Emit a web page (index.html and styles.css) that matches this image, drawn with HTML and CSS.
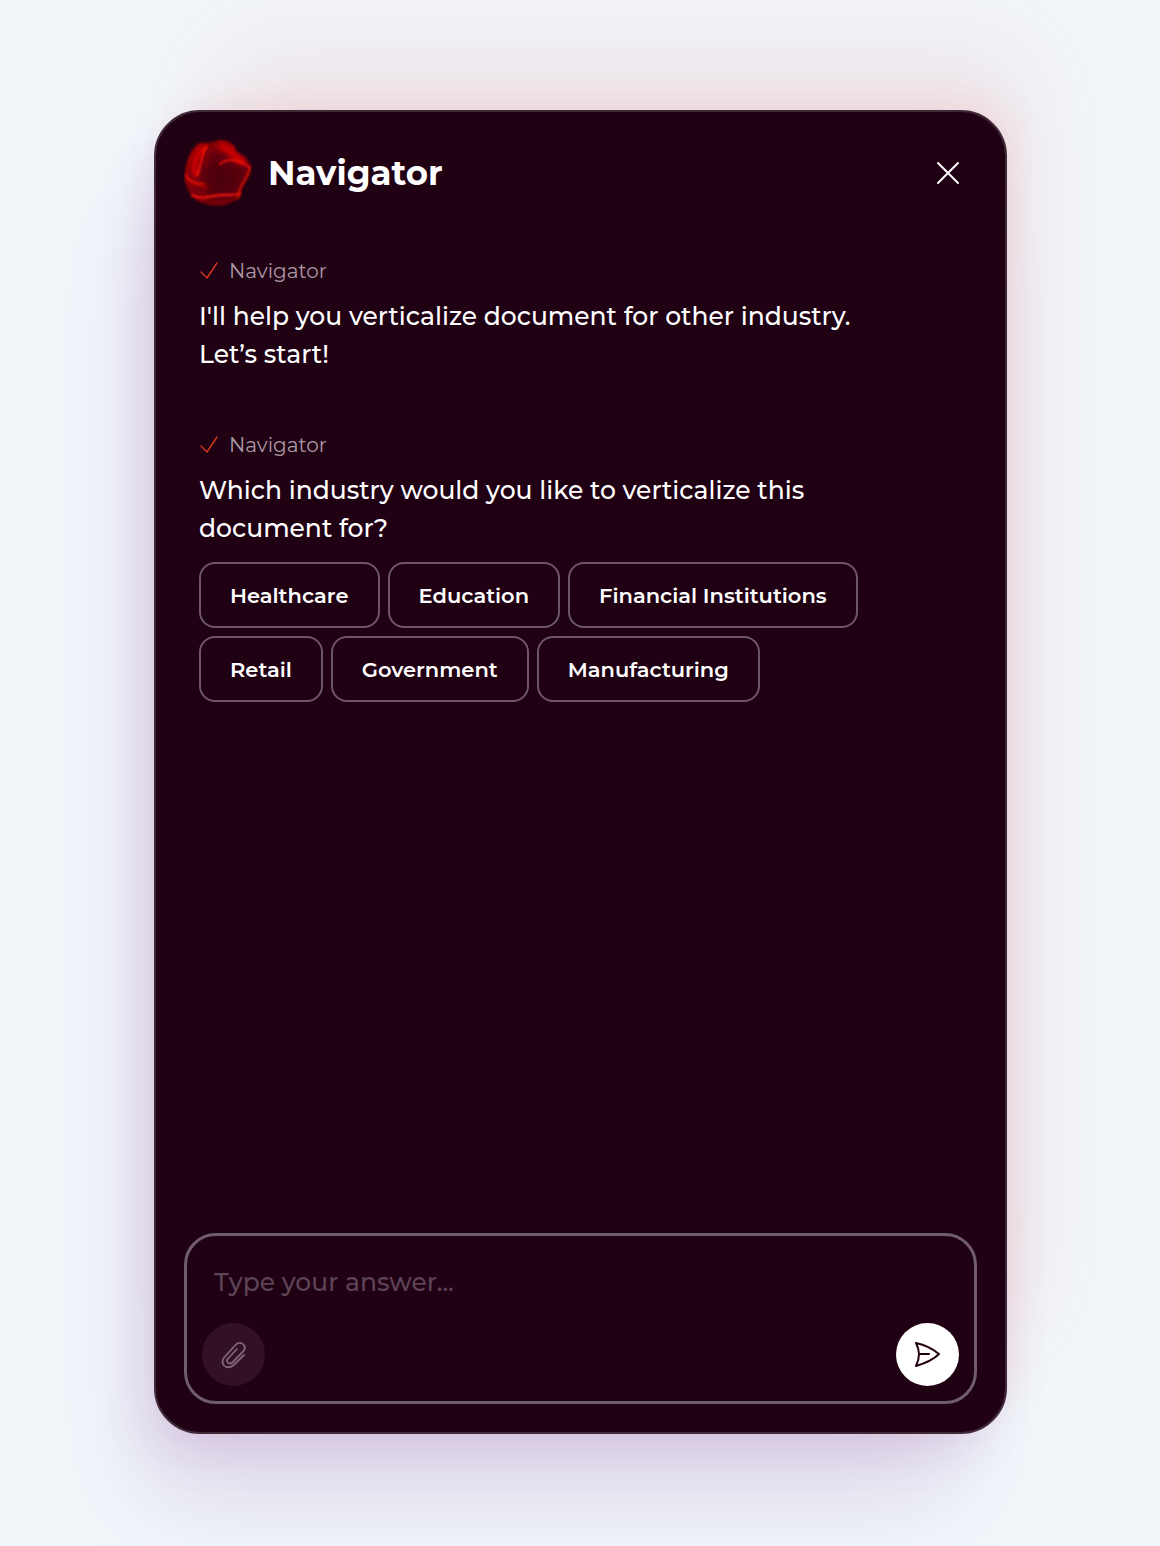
FILE: index.html
```html
<!DOCTYPE html>
<html lang="en">
<head>
  <meta charset="UTF-8">
  <meta name="viewport" content="width=device-width, initial-scale=1">
  <title>Navigator</title>
  <link rel="stylesheet" href="styles.css">
</head>
<body>

  <main class="panel">

    <!-- Header -->
    <header class="panel-header">
      <svg class="avatar" viewBox="0 0 68 68" aria-hidden="true">
        <defs>
          <radialGradient id="orb" cx="0.55" cy="0.6" r="0.6">
            <stop offset="0" stop-color="#4c0008"/>
            <stop offset="0.6" stop-color="#640008"/>
            <stop offset="1" stop-color="#800206"/>
          </radialGradient>
          <filter id="soft" x="-20%" y="-20%" width="140%" height="140%">
            <feGaussianBlur stdDeviation="0.8"/>
          </filter>
          <filter id="glow" x="-40%" y="-40%" width="180%" height="180%">
            <feGaussianBlur stdDeviation="2"/>
          </filter>
          <pattern id="mesh" width="3" height="3" patternUnits="userSpaceOnUse">
            <path d="M0 0H3M0 0V3" stroke="#2a0008" stroke-width="1"/>
          </pattern>
        </defs>
        <path filter="url(#soft)" fill="url(#orb)" d="M16 4C24 3 28 4 34 1C42 0 50 4 52 13C60 16 67 22 67 29C66 39 61 42 57 51C56 61 44 67 33 67C20 66 8 61 5 53C1 46 0 37 2 26C5 15 9 7 16 4Z"/>
        <path fill="url(#mesh)" opacity="0.4" d="M26 28C34 18 54 22 58 30C60 40 53 48 48 54H24C18 46 22 36 26 28Z"/>
        <g fill="none" stroke-linecap="round" filter="url(#glow)">
          <path stroke="#e00000" stroke-width="5" d="M19 9C11 18 8 29 12 36"/>
          <path stroke="#c80000" stroke-width="8" d="M38 8C45 8 48 17 57 22"/>
          <path stroke="#b00000" stroke-width="4" d="M3 40C9 46 16 45 22 48"/>
        </g>
        <g fill="none" stroke-linecap="round" filter="url(#soft)">
          <path stroke="#ff1508" stroke-width="2" d="M23 7C18 13 19 18 17 24C15 30 15 33 13 36"/>
          <path stroke="#d00b05" stroke-width="1" d="M17 5C7 12 2 28 3 40"/>
          <path stroke="#b00905" stroke-width="1" d="M22 28C21 17 27 8 36 4C44 2 48 6 51 13"/>
          <path stroke="#f01208" stroke-width="2" d="M36 25C44 18 56 21 65 28"/>
          <path stroke="#d01208" stroke-width="2" d="M66 28C65 36 60 42 56 50C55 54 57 58 53 59"/>
          <path stroke="#e01208" stroke-width="2" d="M2 36C4 43 13 45 19 45"/>
          <path stroke="#ff1808" stroke-width="2" d="M8 56C18 61 26 57 36 56C45 56 51 57 56 54"/>
          <path stroke="#a00805" stroke-width="1" d="M14 60C24 64 43 65 53 59M5 47C10 52 16 54 24 56"/>
          <path stroke="#c80606" stroke-width="1" d="M51 13C52 18 55 20 61 22M50 6C47 12 49 16 53 19"/>
        </g>
      </svg>
      <h1>Navigator</h1>
      <button class="close-button" type="button" aria-label="Close">
        <svg width="24" height="24" viewBox="0 0 24 24" fill="none" stroke="currentColor" stroke-width="2" stroke-linecap="round">
          <path d="M2 2L22 22M22 2L2 22"/>
        </svg>
      </button>
    </header>

    <!-- Conversation -->
    <section class="messages">
      <article class="message">
        <div class="sender">
          <svg class="check" viewBox="0 0 20 20"><path d="M2 11L8 17L18 2"/></svg>
          <span>Navigator</span>
        </div>
        <p>I'll help you verticalize document for other industry.<br>Let’s start!</p>
      </article>

      <article class="message">
        <div class="sender">
          <svg class="check" viewBox="0 0 20 20"><path d="M2 11L8 17L18 2"/></svg>
          <span>Navigator</span>
        </div>
        <p>Which industry would you like to verticalize this<br>document for?</p>
        <div class="options">
          <button type="button">Healthcare</button>
          <button type="button">Education</button>
          <button type="button">Financial Institutions</button>
          <button type="button">Retail</button>
          <button type="button">Government</button>
          <button type="button">Manufacturing</button>
        </div>
      </article>
    </section>

    <!-- Answer box -->
    <form class="composer">
      <input type="text" placeholder="Type your answer..." aria-label="Your answer">
      <div class="composer-actions">
        <button class="attach-button" type="button" aria-label="Attach a file">
          <svg width="28" height="28" viewBox="0 0 28 28" fill="none" stroke="currentColor" stroke-width="1.8" stroke-linecap="round" stroke-linejoin="round">
            <path d="M24 14L13 24.500C10 27 6 26.700 4 24.500C2 22 2 19 4.500 16L16 3.500C18 1.500 21.300 1.500 23.300 3.300C25.300 5.300 25.200 8 23.200 10.300L12.300 21.500C11 22.800 9 22.800 7.800 21.500C6.700 20.300 6.700 18.800 8 17.500L17 8"/>
          </svg>
        </button>
        <button class="send-button" type="button" aria-label="Send">
          <svg width="28" height="28" viewBox="0 0 28 28" fill="none" stroke="currentColor" stroke-width="2" stroke-linecap="round" stroke-linejoin="round">
            <path d="M2 2C11 4 19 8 25 13C19 19 12 22 2 25C4 21 5 17 5 13C5 9 4 6 2 2ZM5 13H15"/>
          </svg>
        </button>
      </div>
    </form>

  </main>

</body>
</html>
```
FILE: styles.css
```css
* {
  box-sizing: border-box;
}

body {
  margin: 0;
  min-height: 100vh;
  padding: 110px 153px 112px 154px;
  display: flex;
  background-color: #f1f6fb;
  font-family: Montserrat, Inter, "Open Sans", sans-serif;
  color: white;
}

button {
  padding: 0;
  border: none;
  background: none;
  color: inherit;
  font-family: inherit;
  cursor: pointer;
}

.panel {
  flex: 1;
  min-width: 0;
  display: flex;
  flex-direction: column;
  padding: 27px 28px 28px;
  background-color: #200013;
  border: 2px solid #402a38;
  border-radius: 46px;
  box-shadow:
    14px -14px 40px -10px rgba(235, 60, 50, 0.1),
    42px -84px 100px -20px rgba(225, 60, 60, 0.09),
    -14px 24px 50px -10px rgba(120, 20, 130, 0.13),
    -32px 84px 100px -20px rgba(100, 20, 120, 0.12);
}

/* Header */
.panel-header {
  display: flex;
  align-items: center;
}

.avatar {
  width: 68px;
  height: 68px;
}

h1 {
  flex: 1;
  margin: 0 0 0 16px;
  font-size: 34px;
  line-height: 44px;
  font-weight: 700;
}

.close-button {
  width: 58px;
  height: 58px;
  display: flex;
  align-items: center;
  justify-content: center;
}

/* Conversation */
.messages {
  flex: 1;
  display: flex;
  flex-direction: column;
  gap: 57px;
  padding: 49px 15px;
}

.sender {
  display: flex;
  align-items: center;
  gap: 10px;
  color: #ab98a5;
  font-size: 20px;
  line-height: 30px;
  font-weight: 400;
}

.check {
  width: 20px;
  height: 20px;
  fill: none;
  stroke: #d8351f;
  stroke-width: 1.4;
  stroke-linecap: round;
  stroke-linejoin: round;
}

.message p {
  margin: 11px 0 0;
  font-size: 25px;
  line-height: 38px;
  font-weight: 500;
}

.options {
  display: flex;
  flex-wrap: wrap;
  gap: 8px;
  margin-top: 15px;
}

.options button {
  height: 66px;
  padding: 0 29px;
  border: 2px solid #6b5866;
  border-radius: 16px;
  font-size: 21px;
  font-weight: 600;
}

/* Answer box */
.composer {
  padding: 15px;
  border: 3px solid #6f5d6a;
  border-radius: 32px;
}

.composer input {
  display: block;
  width: 100%;
  height: 62px;
  margin-bottom: 10px;
  padding: 0 12px;
  border: none;
  outline: none;
  background: none;
  color: white;
  font-family: inherit;
  font-size: 25px;
  font-weight: 500;
}

.composer input::placeholder {
  color: #5b4454;
}

.composer-actions {
  display: flex;
  justify-content: space-between;
}

.attach-button,
.send-button {
  width: 63px;
  height: 63px;
  display: flex;
  align-items: center;
  justify-content: center;
  border-radius: 50%;
}

.attach-button {
  background-color: #311123;
  color: #80677a;
}

.send-button {
  background-color: white;
  color: #200013;
}
```
